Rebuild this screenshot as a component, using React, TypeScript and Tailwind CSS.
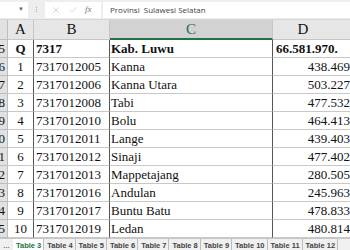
import React from 'react';
import { X, Check } from 'lucide-react';

const rows = [
  { n: '6', a: '1', b: '7317012005', c: 'Kanna', d: '438.469' },
  { n: '7', a: '2', b: '7317012006', c: 'Kanna Utara', d: '503.227' },
  { n: '8', a: '3', b: '7317012008', c: 'Tabi', d: '477.532' },
  { n: '9', a: '4', b: '7317012010', c: 'Bolu', d: '464.413' },
  { n: '10', a: '5', b: '7317012011', c: 'Lange', d: '439.403' },
  { n: '11', a: '6', b: '7317012012', c: 'Sinaji', d: '477.402' },
  { n: '12', a: '7', b: '7317012013', c: 'Mappetajang', d: '280.505' },
  { n: '13', a: '8', b: '7317012016', c: 'Andulan', d: '245.963' },
  { n: '14', a: '9', b: '7317012017', c: 'Buntu Batu', d: '478.833' },
  { n: '15', a: '10', b: '7317012019', c: 'Ledan', d: '480.814' },
];

const tabs = ['Table 4', 'Table 5', 'Table 6', 'Table 7', 'Table 8', 'Table 9', 'Table 10', 'Table 11', 'Table 12'];

const cols = 'grid grid-cols-[8px_26px_76px_163px_108px]';

const App: React.FC = () => {
  return (
    <div className="w-[350px] h-[250px] overflow-hidden bg-white flex flex-col font-['Liberation_Serif',serif] text-[#111]">
      {/* formula bar */}
      <div className="h-[20px] shrink-0 bg-[#eeeeee] flex items-center gap-[2px] border-b border-[#d4d4d4]">
        <div className="w-[28px] h-[16px] bg-white flex items-center justify-end pr-[4px] text-[6px] text-[#666] font-['Liberation_Sans',sans-serif]">
          ▼
        </div>
        <div className="w-[13px] flex flex-col items-center gap-[1px]">
          <span className="w-[1px] h-[1px] bg-[#aaa]" />
          <span className="w-[1px] h-[1px] bg-[#aaa]" />
          <span className="w-[1px] h-[1px] bg-[#aaa]" />
        </div>
        <div className="w-[56px] h-[16px] bg-white flex items-center gap-[7px] pl-[6px] text-[#b5b5b5]">
          <X size={10} strokeWidth={1.2} />
          <Check size={10} strokeWidth={1.2} />
          <span className="italic text-[9px] text-[#777]">fx</span>
        </div>
        <div className="flex-1 h-[16px] bg-white flex items-center pl-[7px] text-[8px] text-[#444] font-['Open_Sans',sans-serif] whitespace-pre">
          Provinsi  Sulawesi Selatan
        </div>
      </div>

      {/* column headers */}
      <div className={`${cols} h-[20px] shrink-0 text-[15px] leading-none`}>
        <div className="bg-[#e1e1e1] border-r border-b border-[#bdbdbd]" />
        <div className="bg-[#e6e6e6] border-r border-b border-[#c6c6c6] flex items-center justify-center">A</div>
        <div className="bg-[#e6e6e6] border-r border-b border-[#c6c6c6] flex items-center justify-center">B</div>
        <div className="bg-[#d2d2d2] border-r border-[#c6c6c6] border-b-2 border-b-[#217346] flex items-center justify-center text-[#217346]">C</div>
        <div className="bg-[#e6e6e6] border-b border-[#c6c6c6] flex items-center justify-center pr-[48px]">D</div>
      </div>

      {/* header data row */}
      <div className={`${cols} h-[18px] shrink-0 text-[13px] leading-none font-bold`}>
        <div className="bg-[#e1e1e1] border-r border-b border-[#bdbdbd] flex items-center justify-end overflow-hidden pr-[2px] font-normal">5</div>
        <div className="border-r border-b border-r-[#555] border-b-[#c8c8c8] flex items-center justify-center">Q</div>
        <div className="border-r border-b border-r-[#555] border-b-[#c8c8c8] flex items-center pl-[2px]">7317</div>
        <div className="border-r border-b border-r-[#555] border-b-[#c8c8c8] flex items-center pl-[1px]">Kab. Luwu</div>
        <div className="border-b border-[#c8c8c8] flex items-center pl-[3px] whitespace-nowrap">66.581.970.</div>
      </div>

      {rows.map((r) => (
        <div key={r.n} className={`${cols} h-[18px] shrink-0 text-[13px] leading-none`}>
          <div className="bg-[#e1e1e1] border-r border-b border-[#bdbdbd] flex items-center justify-end overflow-hidden pr-[2px] whitespace-nowrap">
            {r.n.slice(-1)}
          </div>
          <div className="border-r border-b border-r-[#555] border-b-[#c8c8c8] flex items-center justify-center">{r.a}</div>
          <div className="border-r border-b border-r-[#555] border-b-[#c8c8c8] flex items-center pl-[2px]">{r.b}</div>
          <div className="border-r border-b border-r-[#555] border-b-[#c8c8c8] flex items-center pl-[1px] whitespace-nowrap">{r.c}</div>
          <div className="border-b border-[#c8c8c8] flex items-center justify-end pr-[31px]">{r.d}</div>
        </div>
      ))}

      {/* sheet tabs */}
      <div className="flex-1 bg-[#f0f0f0] border-t border-[#c6c6c6] flex items-start text-[7.5px] font-bold font-['Liberation_Sans',sans-serif] leading-none text-[#444] whitespace-nowrap">
        <div className="w-[13px] shrink-0 pt-[3px] text-center text-[#777]">...</div>
        <div className="shrink-0 bg-white text-[#217346] pl-[3px] pr-[2px] pt-[3px] h-full border-r border-[#bdbdbd]">Table 3</div>
        {tabs.map((t) => (
          <div key={t} className="shrink-0 pl-[3px] pr-[2px] pt-[3px] h-full border-r border-[#bdbdbd]">
            {t}
          </div>
        ))}
      </div>
    </div>
  );
};

export default App;
